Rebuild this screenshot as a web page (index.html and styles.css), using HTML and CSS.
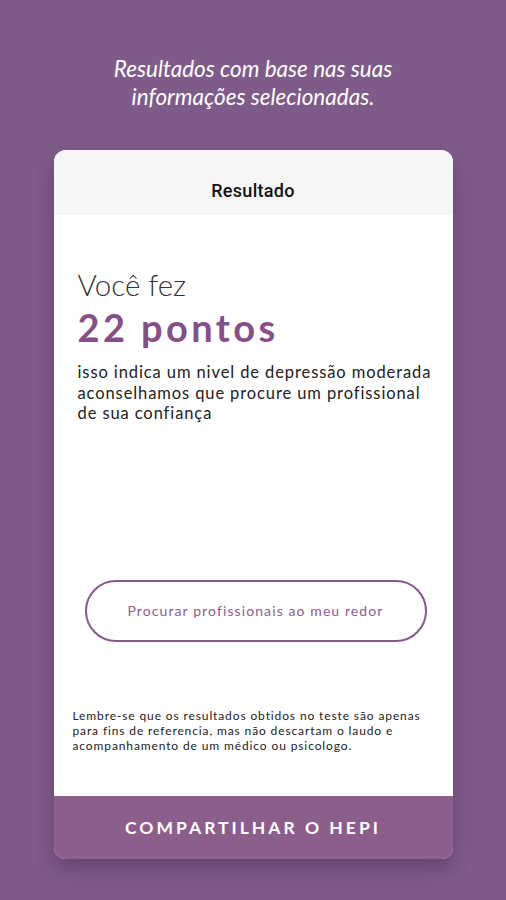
FILE: index.html
```html
<!DOCTYPE html>
<html lang="pt">
  <head>
    <meta charset="utf-8">
    <title>Resultado</title>
    <link rel="stylesheet" href="styles.css">
  </head>
  <body>

  <div class="screen">
    <h1 class="intro">Resultados com base nas suas<br>informações selecionadas.</h1>

    <div class="card">
      <div class="card-head">Resultado</div>

      <div class="card-body">
        <div class="score-label">Você fez</div>
        <div class="score">22 pontos</div>
        <p class="verdict">isso indica um nivel de depressão moderada aconselhamos que procure um profissional de sua confiança</p>

        <a class="find-btn" href="#">Procurar profissionais ao meu redor</a>

        <p class="disclaimer">Lembre-se que os resultados obtidos no teste são apenas para fins de referencia, mas não descartam o laudo e acompanhamento de um médico ou psicologo.</p>
      </div>

      <a class="share-btn" href="#">COMPARTILHAR O HEPI</a>
    </div>
  </div>

  </body>
</html>
```

FILE: styles.css
```css
html {
  height: 100%;
}
body {
  margin: 0;
  padding: 0;
  background: #7e5b88;
  color: #222;
  font-family: "Lato", sans-serif;
  height: 100%;
}

.screen {
  display: flex;
  flex-direction: column;
  align-items: center;
  padding-top: 55px;
}

.intro {
  margin: 0;
  color: #fff;
  font-family: "Lato", sans-serif;
  font-style: italic;
  font-weight: 400;
  font-size: 22.5px;
  line-height: 28px;
  text-align: center;
}

.card {
  margin-top: 39px;
  width: 399px;
  height: 709px;
  background: #fff;
  border-radius: 12px;
  overflow: hidden;
  display: flex;
  flex-direction: column;
  box-shadow: 0 10px 18px rgba(60, 30, 70, 0.35);
}

.card-head {
  height: 49px;
  padding-top: 16px;
  background: #f6f6f6;
  display: flex;
  align-items: center;
  justify-content: center;
  font-family: "Roboto", sans-serif;
  font-weight: 500;
  font-size: 18px;
  letter-spacing: 0.3px;
  color: #111;
}

.card-body {
  flex: 1;
  padding: 53px 12px 0 24px;
  display: flex;
  flex-direction: column;
}

.score-label {
  font-family: "Lato", sans-serif;
  font-weight: 300;
  font-size: 29.5px;
  line-height: 34px;
  color: #333;
}

.score {
  margin-top: 3px;
  font-family: "Lato", sans-serif;
  font-weight: 700;
  font-size: 38px;
  line-height: 44px;
  color: #85508a;
  letter-spacing: 3.4px;
}

.verdict {
  margin: 13px 0 0;
  font-size: 16.5px;
  line-height: 20.5px;
  letter-spacing: 0.9px;
  color: #222;
}

.find-btn {
  margin: 156px 14px 0 7px;
  height: 58px;
  border: 2px solid #87598b;
  border-radius: 31px;
  display: flex;
  align-items: center;
  justify-content: center;
  color: #8a5d8c;
  font-size: 14px;
  letter-spacing: 1.1px;
  text-decoration: none;
}

.disclaimer {
  margin: 66px 0 0 -5px;
  font-size: 12px;
  line-height: 15px;
  letter-spacing: 0.88px;
  color: #222;
}

.share-btn {
  height: 63px;
  background: #8c5e8c;
  display: flex;
  align-items: center;
  justify-content: center;
  color: #fff;
  font-family: "Lato", sans-serif;
  font-weight: 700;
  font-size: 17.5px;
  letter-spacing: 3px;
  text-decoration: none;
}
```
